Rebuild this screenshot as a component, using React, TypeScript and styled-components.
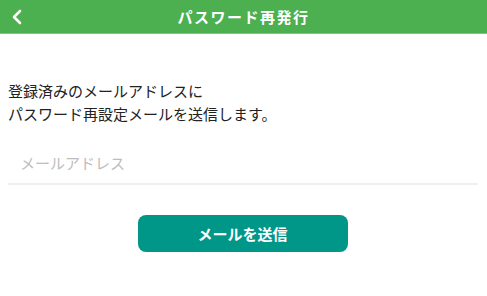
import React from "react";
import styled, { createGlobalStyle } from "styled-components";

const GlobalStyle = createGlobalStyle`
	html, body {
		margin: 0;
		padding: 0;
		background: #ffffff;
		font-family: "Noto Sans CJK JP", "Noto Sans", sans-serif;
	}
`;

const Page = styled.div`
	width: 487px;
	min-height: 296px;
	display: flex;
	flex-direction: column;
`;

const Header = styled.header`
	height: 33px;
	background: #4caf50;
	border-bottom: 1px solid #81c784;
	display: flex;
	align-items: center;
	justify-content: center;
	position: relative;
`;

const BackButton = styled.button`
	position: absolute;
	left: 7px;
	top: 0;
	height: 33px;
	width: 20px;
	padding: 0;
	border: none;
	background: transparent;
	display: flex;
	align-items: center;
	justify-content: center;
	cursor: pointer;
`;

const Title = styled.h1`
	margin: 0;
	color: #ffffff;
	font-size: 15px;
	font-weight: 700;
	letter-spacing: 1.5px;
`;

const Body = styled.main`
	padding: 45px 9px 0 8px;
	display: flex;
	flex-direction: column;
`;

const Lead = styled.p`
	margin: 0;
	font-size: 15px;
	line-height: 23px;
	color: #222222;
`;

const Field = styled.div`
	margin-top: 16px;
	border-bottom: 2px solid #f0f0f0;
	padding: 0 0 0 12px;
`;

const Input = styled.input`
	width: 100%;
	box-sizing: border-box;
	height: 42px;
	border: none;
	outline: none;
	padding: 0;
	font-family: inherit;
	font-size: 15px;
	color: #222222;
	background: transparent;
	&::placeholder {
		color: #bdbdbd;
	}
`;

const Actions = styled.div`
	display: flex;
	justify-content: center;
	margin-top: 30px;
	padding-right: 1px;
`;

const SubmitButton = styled.button`
	width: 210px;
	height: 37px;
	border: none;
	border-radius: 8px;
	background: #009688;
	color: #ffffff;
	font-family: inherit;
	font-size: 15px;
	font-weight: 700;
	cursor: pointer;
`;

export default function App() {
	return (
		<>
			<GlobalStyle />
			<Page>
				<Header>
					<BackButton aria-label="戻る">
						<svg width="12" height="16" viewBox="0 0 12 16">
							<path d="M9 2 L3 8 L9 14" fill="none" stroke="#ffffff" strokeWidth="2.6" strokeLinecap="round" strokeLinejoin="round" />
						</svg>
					</BackButton>
					<Title>パスワード再発行</Title>
				</Header>
				<Body>
					<Lead>
						登録済みのメールアドレスに
						<br />
						パスワード再設定メールを送信します。
					</Lead>
					<Field>
						<Input type="email" placeholder="メールアドレス" />
					</Field>
					<Actions>
						<SubmitButton>メールを送信</SubmitButton>
					</Actions>
				</Body>
			</Page>
		</>
	);
}
